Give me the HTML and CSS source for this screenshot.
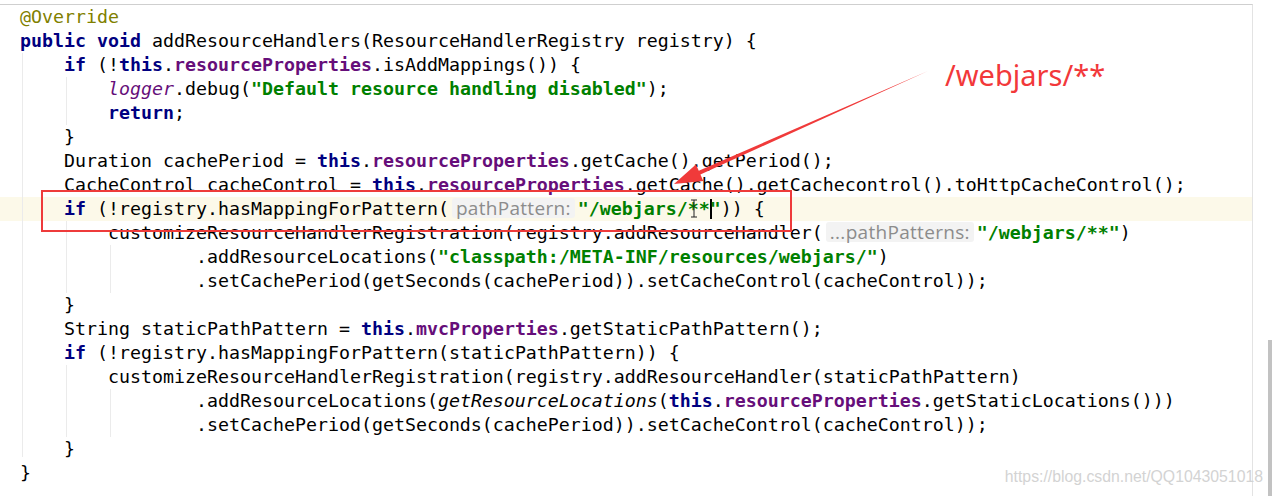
FILE: index.html
```html
<!DOCTYPE html>
<html lang="en">
<head>
    <meta charset="UTF-8">
    <title>WebMvcAutoConfiguration</title>
    <link rel="stylesheet" href="styles.css">
</head>
<body>
    <div class="window">
        <div class="editor">
            <div class="code">
<div class="line"><span class="anno">@Override</span></div>
<div class="line"><span class="kw">public void</span> addResourceHandlers(ResourceHandlerRegistry registry) {</div>
<div class="line">    <span class="kw">if</span> (!<span class="kw">this</span>.<span class="fld">resourceProperties</span>.isAddMappings()) {</div>
<div class="line">        <span class="sfld">logger</span>.debug(<span class="str">"Default resource handling disabled"</span>);</div>
<div class="line">        <span class="kw">return</span>;</div>
<div class="line">    }</div>
<div class="line">    Duration cachePeriod = <span class="kw">this</span>.<span class="fld">resourceProperties</span>.getCache().getPeriod();</div>
<div class="line">    CacheControl cacheControl = <span class="kw">this</span>.<span class="fld">resourceProperties</span>.getCache().getCachecontrol().toHttpCacheControl();</div>
<div class="line current">    <span class="kw">if</span> (!registry.hasMappingForPattern(<span class="hint">pathPattern:</span><span class="str">"/webjars/**<span class="caret"></span>"</span>)) {</div>
<div class="line">        customizeResourceHandlerRegistration(registry.addResourceHandler(<span class="hint">...pathPatterns:</span><span class="str">"/webjars/**"</span>)</div>
<div class="line">                .addResourceLocations(<span class="str">"classpath:/META-INF/resources/webjars/"</span>)</div>
<div class="line">                .setCachePeriod(getSeconds(cachePeriod)).setCacheControl(cacheControl));</div>
<div class="line">    }</div>
<div class="line">    String staticPathPattern = <span class="kw">this</span>.<span class="fld">mvcProperties</span>.getStaticPathPattern();</div>
<div class="line">    <span class="kw">if</span> (!registry.hasMappingForPattern(staticPathPattern)) {</div>
<div class="line">        customizeResourceHandlerRegistration(registry.addResourceHandler(staticPathPattern)</div>
<div class="line">                .addResourceLocations(<span class="static">getResourceLocations</span>(<span class="kw">this</span>.<span class="fld">resourceProperties</span>.getStaticLocations()))</div>
<div class="line">                .setCachePeriod(getSeconds(cachePeriod)).setCacheControl(cacheControl));</div>
<div class="line">    }</div>
<div class="line">}</div>
            </div>

            <!-- indent guides -->
            <div class="guide g-method"></div>
            <div class="guide g-if1"></div>
            <div class="guide g-if2"></div>
            <div class="guide g-cont1"></div>
            <div class="guide g-if3"></div>
            <div class="guide g-cont2"></div>
        </div>
        <div class="scroll">
            <div class="thumb"></div>
        </div>
    </div>

    <!-- annotations drawn over the screenshot -->
    <div class="mark-box"></div>
    <div class="mark-text">/webjars/**</div>
    <svg class="mark-arrow" width="1273" height="496" viewBox="0 0 1273 496">
        <polygon points="928,71 700.4,174.4 703.3,181 674,184 695.9,164.4 698.8,170.8" fill="#f03a3a"/>
        <path d="M691 200h6M694 200v17M691 217h6" stroke="#222" stroke-width="1" fill="none"/>
    </svg>
    <div class="watermark">https://blog.csdn.net/QQ1043051018</div>
</body>
</html>
```

FILE: styles.css
```css
body {
    margin: 0;
    background: #fff;
    overflow: hidden;
}

.window {
    display: flex;
    width: 1273px;
    height: 496px;
    overflow: hidden;
}

.editor {
    position: relative;
    flex: 0 0 1253px;
    box-sizing: border-box;
    margin-top: 4px;
    border-top: 1px solid #cfcfcf;
    border-right: 1px solid #e3e3e3;
}

.code {
    font-family: "DejaVu Sans Mono", monospace;
    font-size: 18.27px;
    color: #000;
}

.line {
    white-space: pre;
    height: 24px;
    line-height: 24px;
    padding-left: 20px;
}

.line.current {
    background: #fcf9e9;
}

.kw {
    color: #000080;
    font-weight: bold;
}

.fld {
    color: #660e7a;
    font-weight: bold;
}

.sfld {
    color: #660e7a;
    font-style: italic;
}

.static {
    font-style: italic;
}

.str {
    color: #008000;
    font-weight: bold;
}

.anno {
    color: #808000;
}

.hint {
    display: inline-block;
    font-family: "Open Sans", "Noto Sans", sans-serif;
    font-size: 19px;
    line-height: 20px;
    color: #8c8c8c;
    background: #f3f3f3;
    border-radius: 3px;
    padding: 0 4px 0 4px;
    margin: 0 3px 0 3px;
    letter-spacing: 0.3px;
}

.caret {
    display: inline-block;
    width: 0;
    height: 20px;
    border-left: 2px solid #000;
    margin-right: -2px;
    vertical-align: -4px;
}

.guide {
    position: absolute;
    width: 1px;
    background: #ebebeb;
}

.g-method { left: 22px; top: 48px; height: 404px; }
.g-if1 { left: 66px; top: 72px; height: 48px; }
.g-if2 { left: 66px; top: 216px; height: 72px; }
.g-cont1 { left: 110px; top: 240px; height: 48px; }
.g-if3 { left: 66px; top: 360px; height: 72px; }
.g-cont2 { left: 110px; top: 384px; height: 48px; }

.scroll {
    flex: 1;
    display: flex;
    justify-content: flex-end;
    padding-top: 340px;
}

.thumb {
    width: 4px;
    height: 156px;
    margin-right: 1px;
    background: #c2c2c2;
}

.mark-box {
    position: absolute;
    left: 41px;
    top: 190px;
    width: 747px;
    height: 38px;
    border: 2px solid #ee3b3b;
}

.mark-text {
    position: absolute;
    left: 945px;
    top: 58px;
    font-family: "Noto Sans", "Open Sans", sans-serif;
    font-size: 29px;
    line-height: 34px;
    color: #f2383a;
}

.mark-arrow {
    position: absolute;
    left: 0;
    top: 0;
}

.watermark {
    position: absolute;
    right: 10px;
    top: 468px;
    font-family: "Liberation Sans", Arial, sans-serif;
    font-size: 15.8px;
    line-height: 18px;
    color: #d3d3d3;
}
```
